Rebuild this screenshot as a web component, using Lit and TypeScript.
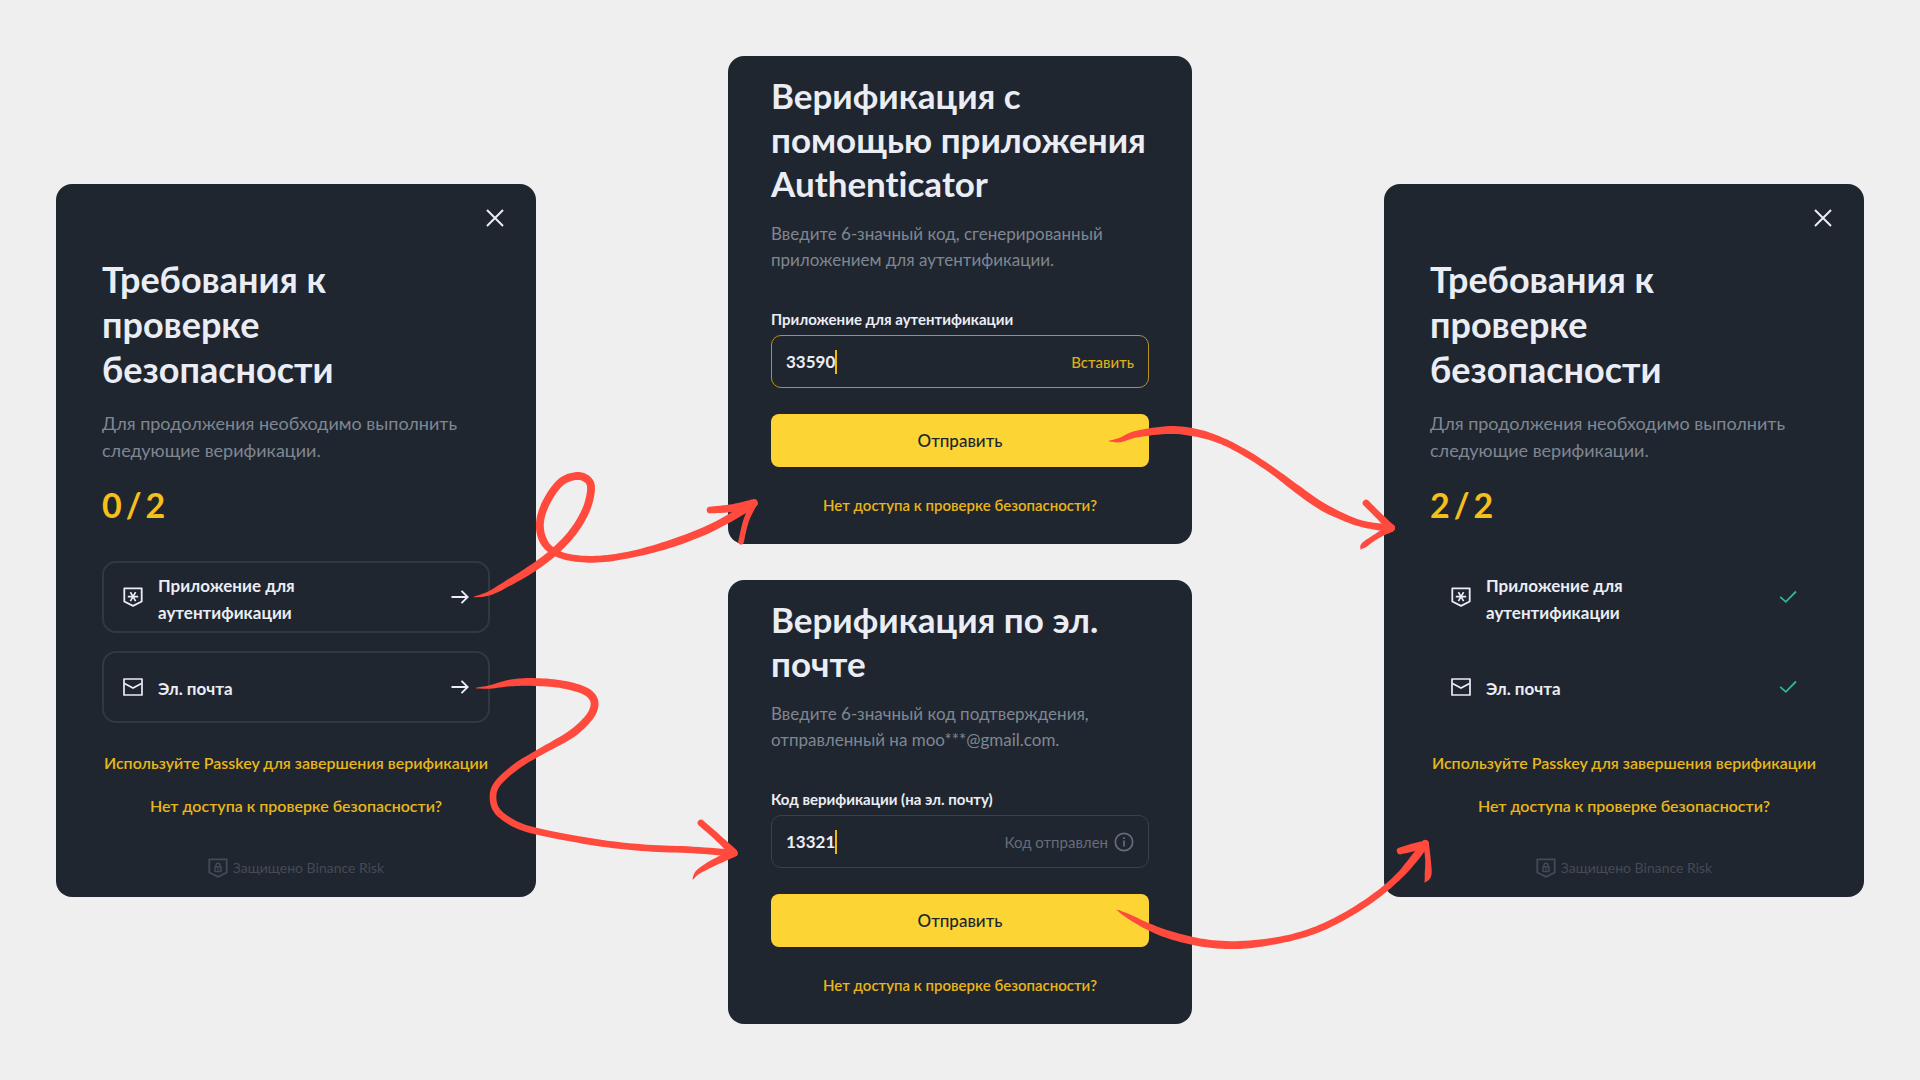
import { LitElement, html, svg, css } from "lit";
import { customElement, property } from "lit/decorators.js";
import { classMap } from "lit/directives/class-map.js";

const base = css`
  :host {
    display: block;
    font-family: Lato, "Open Sans", sans-serif;
    font-variant-ligatures: none;
    color: #ebedf5;
  }
  *,
  *::before,
  *::after {
    box-sizing: border-box;
  }
  h2,
  p,
  ul {
    margin: 0;
    padding: 0;
  }
  button {
    border: 0;
    padding: 0;
    background: none;
    color: inherit;
    font: inherit;
    cursor: pointer;
  }
  svg {
    display: block;
    flex: none;
  }
  .card {
    border-radius: 16px;
    background: #20262f;
  }
  .link {
    align-self: center;
    line-height: 24px;
    font-weight: 600;
    text-align: center;
    color: #e8b61a;
    text-decoration: none;
  }
`;

const shieldOutline = svg`<path d="M1.300 1.300h17.400v13.200L10 18.900l-8.700-4.400z" fill="none" stroke="currentColor" stroke-width="1.800" stroke-linejoin="round"/>`;

const authIcon = html`<svg width="20" height="20" viewBox="0 0 20 20" aria-hidden="true">
  ${shieldOutline}
  <path d="M4.800 9.600h10.400M7.400 5.100l5.200 9M12.600 5.100l-5.200 9" fill="none" stroke="currentColor" stroke-width="1.700" />
</svg>`;

const mailIcon = html`<svg width="20" height="20" viewBox="0 0 20 20" aria-hidden="true">
  <path d="M1 2h18v16H1z" fill="none" stroke="currentColor" stroke-width="1.700" stroke-linejoin="round" />
  <path d="M1.500 6.600L10 11l8.500-4.400" fill="none" stroke="currentColor" stroke-width="1.700" />
</svg>`;

const lockIcon = html`<svg width="20" height="20" viewBox="0 0 20 20" aria-hidden="true">
  ${shieldOutline}
  <path d="M7 9h6v4.600H7zM8 9V7.300a2 2 0 0 1 4 0V9M10 10.600v1.400" fill="none" stroke="currentColor" stroke-width="1.500" stroke-linejoin="round" />
</svg>`;

const infoIcon = html`<svg width="20" height="20" viewBox="0 0 20 20" aria-hidden="true">
  <circle cx="10" cy="10" r="8.700" fill="none" stroke="currentColor" stroke-width="1.700" />
  <path d="M10 8.600v6M10 5.200v1.900" fill="none" stroke="currentColor" stroke-width="1.700" />
</svg>`;

const arrowIcon = html`<svg width="18" height="16" viewBox="0 0 18 16" aria-hidden="true">
  <path d="M.5 8h16M10.500 1.800L16.700 8l-6.200 6.200" fill="none" stroke="currentColor" stroke-width="1.900" />
</svg>`;

const checkIcon = html`<svg width="18" height="14" viewBox="0 0 18 14" aria-hidden="true">
  <path d="M1.200 6.800l5.600 5L17 1.500" fill="none" stroke="#2fb894" stroke-width="1.800" />
</svg>`;

const closeIcon = html`<svg width="18" height="18" viewBox="0 0 18 18" aria-hidden="true">
  <path d="M1 1l16 16M17 1L1 17" fill="none" stroke="currentColor" stroke-width="2" />
</svg>`;

interface Step {
  icon: unknown;
  label: string;
}

const steps: Step[] = [
  { icon: authIcon, label: "Приложение для аутентификации" },
  { icon: mailIcon, label: "Эл. почта" },
];

@customElement("requirements-card")
export class RequirementsCard extends LitElement {
  @property({ type: Number }) done = 0;

  static styles = [
    base,
    css`
      .card {
        display: flex;
        flex-direction: column;
        padding: 22px 46px 19px;
      }
      .close {
        display: grid;
        place-items: center;
        width: 24px;
        height: 24px;
        align-self: flex-end;
        margin-right: -17px;
      }
      .title {
        max-width: 280px;
        margin-top: 27px;
        font-size: 36px;
        line-height: 45px;
        font-weight: 700;
      }
      .lead {
        margin-top: 18px;
        font-size: 18px;
        line-height: 27px;
        color: #7f8692;
      }
      .count {
        display: flex;
        gap: 4px;
        margin-top: 18px;
        font-size: 34px;
        line-height: 45px;
        font-weight: 700;
        color: #f5c01c;
      }
      .steps {
        display: flex;
        flex-direction: column;
        gap: 18px;
        margin-top: 34px;
        list-style: none;
      }
      .step {
        display: flex;
        align-items: center;
        gap: 15px;
        width: 100%;
        min-height: 72px;
        padding: 7px 19px;
        border: 2px solid #313843;
        border-radius: 14px;
        font-size: 17px;
        line-height: 27px;
        font-weight: 700;
        text-align: left;
      }
      .step.passed {
        border-color: transparent;
      }
      .step-label {
        flex: 1;
        padding-top: 2px;
        margin-bottom: -2px;
      }
      .step-text {
        display: block;
        max-width: 180px;
      }
      .link {
        margin-top: 19px;
        font-size: 16px;
      }
      .link.first {
        margin-top: 28px;
        white-space: nowrap;
      }
      .secured {
        display: flex;
        justify-content: center;
        align-items: center;
        gap: 5px;
        margin-top: 40px;
        font-size: 14px;
        line-height: 20px;
        color: #444b57;
      }
    `,
  ];

  render() {
    const total = steps.length;
    return html`<section class="card">
      <button class="close" aria-label="Закрыть">${closeIcon}</button>
      <h2 class="title">Требования к проверке безопасности</h2>
      <p class="lead">Для продолжения необходимо выполнить следующие верификации.</p>
      <p class="count"><span>${this.done}</span><span>/</span><span>${total}</span></p>
      <ul class="steps">
        ${steps.map((s, i) => {
          const passed = i < this.done;
          return html`<li>
            <button class=${classMap({ step: true, passed })}>
              ${s.icon}
              <span class="step-label"><span class="step-text">${s.label}</span></span>
              ${passed ? checkIcon : arrowIcon}
            </button>
          </li>`;
        })}
      </ul>
      <a class="link first" href="#passkey">Используйте Passkey для завершения верификации</a>
      <a class="link" href="#help">Нет доступа к проверке безопасности?</a>
      <p class="secured">${lockIcon}<span>Защищено Binance Risk</span></p>
    </section>`;
  }
}

@customElement("code-card")
export class CodeCard extends LitElement {
  @property() heading = "";
  @property() lead = "";
  @property() label = "";
  @property() value = "";
  @property({ type: Boolean }) sent = false;

  static styles = [
    base,
    css`
      .card {
        display: flex;
        flex-direction: column;
        padding: 17px 43px 27px;
      }
      .title {
        font-size: 35px;
        line-height: 44px;
        font-weight: 700;
      }
      .lead {
        margin-top: 16px;
        font-size: 17px;
        line-height: 26px;
        color: #7f8692;
      }
      .label {
        margin-top: 35px;
        font-size: 15px;
        line-height: 22px;
        font-weight: 700;
      }
      .field {
        display: flex;
        align-items: center;
        height: 53px;
        margin-top: 5px;
        padding: 0 14px;
        border: 1px solid #b8901c;
        border-radius: 10px;
      }
      .field.sent {
        border-color: #3a414c;
      }
      .input {
        padding: 0;
        border: 0;
        outline: 0;
        background: none;
        color: inherit;
        font: inherit;
        font-size: 17px;
        font-weight: 700;
        line-height: 24px;
      }
      .caret {
        width: 2px;
        height: 24px;
        background: #f0b90b;
      }
      .side {
        display: flex;
        align-items: center;
        gap: 6px;
        margin-left: auto;
        font-size: 15px;
        line-height: 22px;
      }
      .paste {
        font-weight: 500;
        color: #dcae1c;
      }
      .note {
        color: #666d79;
      }
      .submit {
        height: 53px;
        margin-top: 26px;
        border-radius: 8px;
        background: #fcd535;
        font-size: 17px;
        font-weight: 500;
        color: #202630;
      }
      .link {
        margin-top: 26px;
        font-size: 15px;
      }
    `,
  ];

  render() {
    return html`<section class="card">
      <h2 class="title">${this.heading}</h2>
      <p class="lead">${this.lead}</p>
      <label class="label" for="code">${this.label}</label>
      <div class=${classMap({ field: true, sent: this.sent })}>
        <input id="code" class="input" inputmode="numeric" .value=${this.value} style="width:${this.value.length}ch" />
        <span class="caret"></span>
        ${this.sent
          ? html`<span class="side note"><span>Код отправлен</span>${infoIcon}</span>`
          : html`<button class="side paste">Вставить</button>`}
      </div>
      <button class="submit">Отправить</button>
      <a class="link" href="#help">Нет доступа к проверке безопасности?</a>
    </section>`;
  }
}

/* A brush stroke is a list of [x, y, thickness] knots. */
type Knot = [number, number, number];

const THICKEN = 1.12;

function brush(knots: Knot[]): string {
  const at = (i: number) => knots[Math.max(0, Math.min(knots.length - 1, i))];
  const pts: Knot[] = [];
  for (let i = 0; i < knots.length - 1; i++) {
    const [a, b, c, d] = [at(i - 1), at(i), at(i + 1), at(i + 2)];
    for (let s = 0; s < 8; s++) {
      const t = s / 8;
      pts.push(
        [0, 1, 2].map(
          (k) =>
            0.5 *
            (2 * b[k] +
              (c[k] - a[k]) * t +
              (2 * a[k] - 5 * b[k] + 4 * c[k] - d[k]) * t * t +
              (3 * b[k] - a[k] - 3 * c[k] + d[k]) * t * t * t),
        ) as Knot,
      );
    }
  }
  pts.push(knots[knots.length - 1]);
  const side = (sign: number) =>
    pts.map(([x, y, w], i) => {
      const p = pts[Math.max(0, i - 1)];
      const n = pts[Math.min(pts.length - 1, i + 1)];
      const dx = n[0] - p[0];
      const dy = n[1] - p[1];
      const l = Math.hypot(dx, dy) || 1;
      const r = (sign * w * THICKEN) / 2;
      return `${(x - (dy / l) * r).toFixed(2)} ${(y + (dx / l) * r).toFixed(2)}`;
    });
  const left = side(1);
  const right = side(-1).reverse();
  const r0 = (knots[0][2] * THICKEN) / 2;
  const r1 = (knots[knots.length - 1][2] * THICKEN) / 2;
  return `M${left.join("L")}A${r1} ${r1} 0 0 0 ${right.join("L")}A${r0} ${r0} 0 0 0 ${left[0]}Z`;
}

const strokes: Knot[][] = [
  // step 1 -> authenticator card
  [[474, 597, 0.6], [490, 593, 4], [510, 582, 6], [533, 568, 7], [554, 552, 7], [573, 532, 7], [586, 510, 7], [591, 490, 7], [588, 480, 7], [577, 476, 7], [561, 482, 7], [547, 501, 7], [540, 522, 7], [543, 540, 7], [554, 552, 6], [573, 558, 6], [600, 559, 6], [633, 554, 6], [673, 543, 7], [713, 527, 7], [752, 505, 7]],
  [[710, 510, 6], [733, 508, 7], [754, 503, 7]],
  [[754, 503, 6], [746, 521, 5], [741, 542, 5]],
  // step 2 -> e-mail card
  [[476, 688, 0.6], [490, 687, 3], [510, 683, 6], [533, 682, 7], [560, 684, 7], [583, 690, 7], [593, 698, 7], [594, 708, 7], [587, 720, 7], [570, 735, 7], [540, 752, 6], [517, 766, 6], [498, 783, 6], [493, 797, 6], [498, 812, 6], [517, 825, 6], [540, 832, 6], [570, 838, 6], [607, 844, 6], [647, 848, 6], [693, 850, 6], [733, 853, 6]],
  [[701, 823, 6], [717, 837, 6], [733, 852, 7]],
  [[734, 853, 7], [713, 863, 6], [698, 872, 4], [693, 879, 1]],
  // authenticator card -> result
  [[1109, 441, 0.6], [1120, 440, 4], [1137, 434, 6], [1170, 430, 7], [1197, 433, 7], [1222, 441, 6], [1247, 454, 6], [1273, 471, 6], [1297, 489, 7], [1323, 507, 7], [1353, 521, 6], [1373, 526, 6], [1391, 528, 7]],
  [[1366, 503, 6], [1378, 515, 6], [1391, 528, 7]],
  [[1391, 528, 7], [1377, 536, 5], [1364, 545, 5], [1361, 549, 1]],
  // e-mail card -> result
  [[1117, 910, 0.6], [1128, 916, 4], [1147, 926, 6], [1170, 935, 7], [1204, 943, 7], [1240, 945, 7], [1280, 940, 6], [1313, 931, 6], [1343, 917, 6], [1373, 898, 6], [1397, 878, 6], [1413, 860, 7], [1425, 844, 7]],
  [[1400, 851, 6], [1411, 848, 7], [1425, 844, 6]],
  [[1426, 843, 5], [1428, 860, 5], [1428, 875, 6], [1425, 882, 1]],
];

@customElement("app-root")
export class AppRoot extends LitElement {
  static styles = [
    base,
    css`
      .stage {
        position: relative;
        display: grid;
        grid-template-columns: 30fr 29fr 30fr;
        align-items: center;
        column-gap: 10vw;
        min-height: 100vh;
        padding: 56px;
        background: #efefef;
      }
      .forms {
        display: flex;
        flex-direction: column;
        gap: 36px;
      }
      .flow {
        position: absolute;
        inset: 0;
        width: 100%;
        height: 100%;
        pointer-events: none;
      }
    `,
  ];

  render() {
    return html`<main class="stage">
      <requirements-card .done=${0}></requirements-card>
      <div class="forms">
        <code-card
          heading="Верификация с помощью приложения Authenticator"
          lead="Введите 6-значный код, сгенерированный приложением для аутентификации."
          label="Приложение для аутентификации"
          value="33590"
        ></code-card>
        <code-card
          heading="Верификация по эл. почте"
          lead="Введите 6-значный код подтверждения, отправленный на moo***@gmail.com."
          label="Код верификации (на эл. почту)"
          value="13321"
          sent
        ></code-card>
      </div>
      <requirements-card .done=${2}></requirements-card>
      <svg class="flow" viewBox="0 0 1920 1080" fill="#ff4a3d" aria-hidden="true">
        ${strokes.map((k) => svg`<path d=${brush(k)} />`)}
      </svg>
    </main>`;
  }
}
